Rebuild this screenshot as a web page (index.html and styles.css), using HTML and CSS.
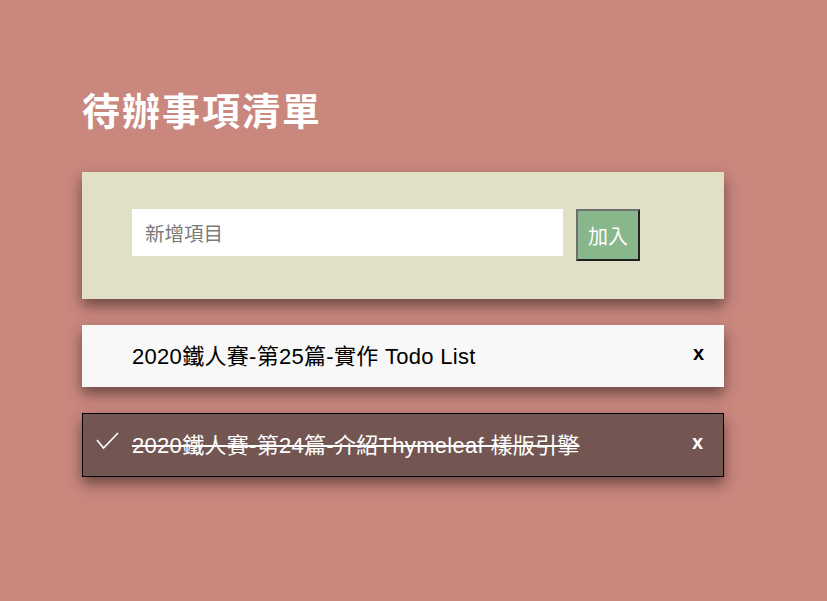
FILE: index.html
```html
<!DOCTYPE html>
<html lang="zh-Hant">
<head>
<meta charset="utf-8">
<title>待辦事項清單</title>
<link rel="stylesheet" href="styles.css">
</head>
<body>
<main class="app">
  <h1 class="title">待辦事項清單</h1>
  <form class="add-card">
    <input class="add-input" type="text" placeholder="新增項目">
    <button class="add-btn" type="button">加入</button>
  </form>
  <ul class="todo-list">
    <li class="todo">
      <span class="check"></span>
      <span class="todo-text">2020鐵人賽-第25篇-實作 Todo List</span>
      <span class="remove">x</span>
    </li>
    <li class="todo done">
      <span class="check"><svg width="23" height="18" viewBox="0 0 23 18"><polyline points="1,8 7.5,16 22,1" fill="none" stroke="#fff" stroke-width="1.6"/></svg></span>
      <span class="todo-text">2020鐵人賽-第24篇-介紹Thymeleaf 樣版引擎</span>
      <span class="remove">x</span>
    </li>
  </ul>
</main>
</body>
</html>
```
FILE: styles.css
```css
* { box-sizing: border-box; }
html, body { margin: 0; padding: 0; }
body {
  background: #c9877e;
  font-family: "Liberation Sans", "Noto Sans CJK TC", sans-serif;
  width: 827px;
  height: 601px;
  overflow: hidden;
}
.app {
  padding: 82px 0 0 82px;
  width: 724px;
}
.title {
  margin: 0 0 36px 0;
  color: #fff;
  font-family: "Noto Sans CJK TC", sans-serif;
  font-size: 38px;
  letter-spacing: 2px;
  font-weight: 700;
  line-height: 54px;
}
.add-card {
  display: flex;
  align-items: flex-start;
  gap: 13px;
  margin: 0;
  height: 127px;
  padding: 37px 0 0 50px;
  background: #e1e0c7;
  box-shadow: 0 7px 13px rgba(50, 30, 30, 0.6);
}
.add-input {
  width: 431px;
  height: 47px;
  border: none;
  outline: none;
  padding: 0 0 0 13px;
  font-family: "Noto Sans CJK TC", sans-serif;
  font-size: 19.5px;
  background: #fff;
  color: #333;
}
.add-input::placeholder { color: #7a7a7a; }
.add-btn {
  width: 64px;
  height: 52px;
  background: #87b78a;
  color: #fff;
  font-family: "Noto Sans CJK TC", sans-serif;
  font-size: 20px;
  border-style: solid;
  border-width: 2px;
  border-color: #6f6f6f #222 #222 #6f6f6f;
  padding: 0;
}
.todo-list {
  list-style: none;
  margin: 26px 0 0 0;
  padding: 0;
  display: flex;
  flex-direction: column;
  gap: 26px;
}
.todo {
  display: flex;
  align-items: center;
  height: 62px;
  padding: 0 20px 0 14px;
  background: #f8f8f8;
  color: #000;
  font-size: 22px;
  letter-spacing: 0.3px;
  box-shadow: 0 7px 13px rgba(50, 30, 30, 0.6);
}
.check {
  width: 36px;
  display: flex;
  align-items: center;
  margin-top: -8px;
}
.todo-text {
  flex: 1;
  margin-top: -5px;
}
.remove {
  font-weight: 700;
  font-size: 20px;
  letter-spacing: 0;
  margin-top: -6px;
}
.todo.done {
  height: 64px;
  background: #735652;
  border: 1px solid #000;
  padding-left: 13px;
  color: #fff;
}
.todo.done .todo-text {
  text-decoration: line-through;
}
```
